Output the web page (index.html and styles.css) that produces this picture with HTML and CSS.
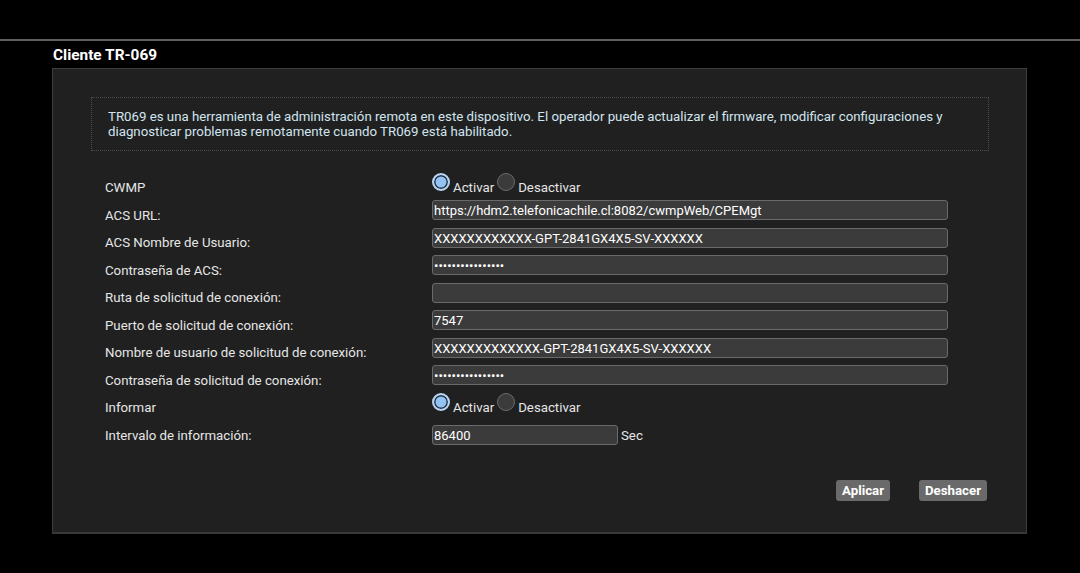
FILE: index.html
```html
<!DOCTYPE html>
<html lang="es">
<head>
    <meta charset="UTF-8">
    <meta name="viewport" content="width=device-width, initial-scale=1.0">
    <title>Cliente TR-069</title>
    <link rel="stylesheet" href="styles.css">
</head>
<body>
    <div class="topline"></div>
    <h2 class="page-title">Cliente TR-069</h2>

    <div class="panel">
        <div class="info">
            TR069 es una herramienta de administración remota en este dispositivo. El operador puede actualizar el firmware, modificar configuraciones y diagnosticar problemas remotamente cuando TR069 está habilitado.
        </div>

        <form class="tr-form" onsubmit="return false;">
            <div class="row">
                <label class="lbl">CWMP</label>
                <div class="radios">
                    <input type="radio" name="cwmp" id="cwmpOn" checked>
                    <label for="cwmpOn">Activar</label>
                    <input type="radio" name="cwmp" id="cwmpOff">
                    <label for="cwmpOff">Desactivar</label>
                </div>
            </div>
            <div class="row">
                <label class="lbl" for="acsUrl">ACS URL:</label>
                <input type="text" id="acsUrl" class="field" value="https://hdm2.telefonicachile.cl:8082/cwmpWeb/CPEMgt">
            </div>
            <div class="row">
                <label class="lbl" for="acsUser">ACS Nombre de Usuario:</label>
                <input type="text" id="acsUser" class="field" value="XXXXXXXXXXXX-GPT-2841GX4X5-SV-XXXXXX">
            </div>
            <div class="row">
                <label class="lbl" for="acsPass">Contraseña de ACS:</label>
                <input type="password" id="acsPass" class="field" value="aaaaaaaaaaaaaaaa">
            </div>
            <div class="row">
                <label class="lbl" for="connPath">Ruta de solicitud de conexión:</label>
                <input type="text" id="connPath" class="field" value="">
            </div>
            <div class="row">
                <label class="lbl" for="connPort">Puerto de solicitud de conexión:</label>
                <input type="text" id="connPort" class="field" value="7547">
            </div>
            <div class="row">
                <label class="lbl" for="connUser">Nombre de usuario de solicitud de conexión:</label>
                <input type="text" id="connUser" class="field" value="XXXXXXXXXXXXX-GPT-2841GX4X5-SV-XXXXXX">
            </div>
            <div class="row">
                <label class="lbl" for="connPass">Contraseña de solicitud de conexión:</label>
                <input type="password" id="connPass" class="field" value="aaaaaaaaaaaaaaaa">
            </div>
            <div class="row">
                <label class="lbl">Informar</label>
                <div class="radios">
                    <input type="radio" name="inform" id="informOn" checked>
                    <label for="informOn">Activar</label>
                    <input type="radio" name="inform" id="informOff">
                    <label for="informOff">Desactivar</label>
                </div>
            </div>
            <div class="row">
                <label class="lbl" for="interval">Intervalo de información:</label>
                <input type="text" id="interval" class="field field-short" value="86400">
                <span class="unit">Sec</span>
            </div>

            <div class="actions">
                <button type="button" class="btn">Aplicar</button>
                <button type="button" class="btn">Deshacer</button>
            </div>
        </form>
    </div>
</body>
</html>
```

FILE: styles.css
```css
* {
    box-sizing: border-box;
}

body {
    margin: 0;
    background: #000;
    font-family: Roboto, "Liberation Sans", sans-serif;
    color: #e6e6e6;
}

.topline {
    height: 2px;
    margin-top: 39px;
    background-color: #5e5e5e;
}

.page-title {
    margin: 5px 0 0 53px;
    font-size: 15.4px;
    line-height: 18px;
    font-weight: bold;
    color: #fff;
}

.panel {
    margin: 4px 0 0 52px;
    width: 975px;
    height: 466px;
    padding: 28px 37px 0 38px;
    background-color: #202020;
    border: 1px solid #3d3d3d;
    border-bottom: 2px solid #383838;
}

.info {
    padding: 11px 16px 11px;
    border: 1px dotted #4c4c4c;
    font-size: 13.25px;
    line-height: 15px;
    color: #d2e5ef;
}

.tr-form {
    margin-top: 21px;
    padding-left: 14px;
}

.row {
    display: flex;
    align-items: flex-start;
    height: 27.5px;
    font-size: 13.25px;
}

.lbl {
    width: 327px;
    flex-shrink: 0;
    padding-top: 2px;
    line-height: 27.5px;
}

.field {
    width: 516px;
    height: 20px;
    margin: 0.5px 0 0;
    padding: 1px 1px 0;
    background-color: #3b3b3b;
    border: 1px solid #6a6a6a;
    border-radius: 3px;
    color: #fff;
    font-family: Roboto, "Liberation Sans", sans-serif;
    font-size: 13px;
    outline: none;
}

.field-short {
    width: 186px;
    margin-top: 5px;
}

.unit {
    margin: 2px 0 0 3px;
    line-height: 27.5px;
}

.radios {
    display: flex;
    align-items: flex-start;
}

.radios label {
    padding-top: 2px;
    line-height: 27.5px;
    margin: 0 3px 0 3px;
}

.radios input[type="radio"] {
    appearance: none;
    -webkit-appearance: none;
    width: 18px;
    height: 18px;
    margin: 1px 0 0 0;
    border-radius: 50%;
    background-color: #3b3b3b;
    border: 1px solid #6a6a6a;
}

.radios input[type="radio"]:checked {
    background-color: #93c3f5;
    border: 2px solid #b9d4f0;
    box-shadow: inset 0 0 0 1.5px #22303d;
}

.actions {
    display: flex;
    justify-content: flex-end;
    gap: 29px;
    margin-top: 32.75px;
    padding-right: 2px;
}

.btn {
    height: 21px;
    padding: 0 6px;
    background-color: #6a6a6a;
    border: none;
    border-radius: 3px;
    color: #fff;
    font-family: Roboto, "Liberation Sans", sans-serif;
    font-size: 13.25px;
    font-weight: bold;
    cursor: pointer;
}
```
